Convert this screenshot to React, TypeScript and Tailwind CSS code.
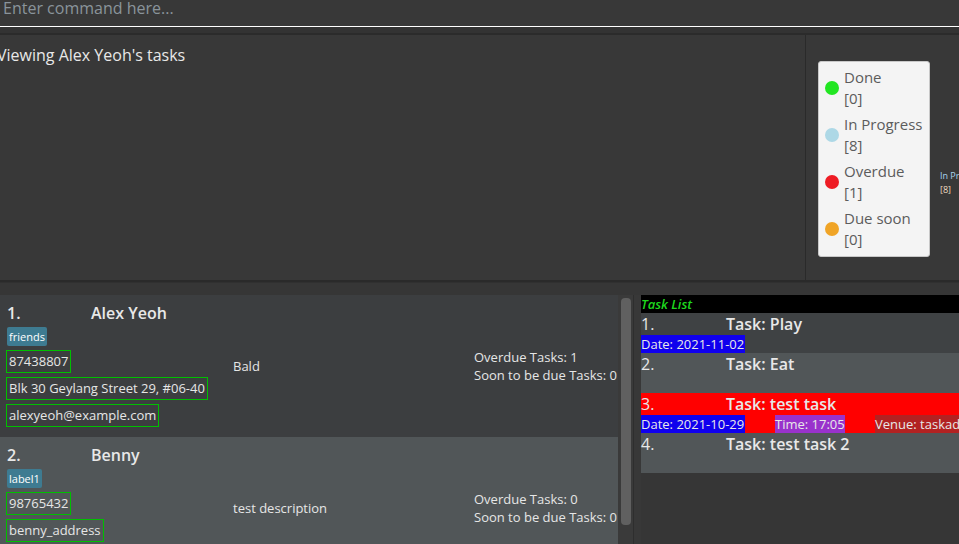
import React from "react";

const font = { fontFamily: '"Open Sans", "Noto Sans", sans-serif' };

type Person = {
  idx: number;
  name: string;
  tag: string;
  phone: string;
  address: string;
  email: string;
  desc: string;
  overdue: number;
  soon: number;
  bg: string;
};

const people: Person[] = [
  {
    idx: 1,
    name: "Alex Yeoh",
    tag: "friends",
    phone: "87438807",
    address: "Blk 30 Geylang Street 29, #06-40",
    email: "alexyeoh@example.com",
    desc: "Bald",
    overdue: 1,
    soon: 0,
    bg: "bg-[#3c3e40]",
  },
  {
    idx: 2,
    name: "Benny",
    tag: "label1",
    phone: "98765432",
    address: "benny_address",
    email: "benny@example.com",
    desc: "test description",
    overdue: 0,
    soon: 0,
    bg: "bg-[#515658]",
  },
];

const legend = [
  { label: "Done", count: 0, color: "bg-[#22e622]" },
  { label: "In Progress", count: 8, color: "bg-[#add8e6]" },
  { label: "Overdue", count: 1, color: "bg-[#ee1c24]" },
  { label: "Due soon", count: 0, color: "bg-[#f0a426]" },
];

function PersonCard({ p }: { p: Person }) {
  return (
    <div className={`flex h-[142px] shrink-0 items-center ${p.bg}`}>
      <div className="flex h-full w-[233px] shrink-0 flex-col pl-[6px] pt-[8px]">
        <div className="flex h-[20px] items-center text-[16px] font-semibold text-[#e8e8e8]">
          <span className="w-[85px] pl-px">{p.idx}.</span>
          <span>{p.name}</span>
        </div>
        <div className="mt-[4px] flex">
          <span className="ml-px rounded-[2px] bg-[#3e7b91] px-[2px] text-[11px] leading-[19px] text-white">
            {p.tag}
          </span>
        </div>
        {[p.phone, p.address, p.email].map((v) => (
          <div key={v} className="mt-[4px] flex">
            <span className="border border-[#00c000] px-[2px] text-[13px] leading-[21px] text-[#e6e6e6]">
              {v}
            </span>
          </div>
        ))}
      </div>
      <div className="w-[241px] shrink-0 pt-px text-[13px] text-[#e6e6e6]">{p.desc}</div>
      <div className="whitespace-nowrap text-[13px] leading-[18px] text-[#e6e6e6]">
        <div>Overdue Tasks: {p.overdue}</div>
        <div>Soon to be due Tasks: {p.soon}</div>
      </div>
    </div>
  );
}

function TaskRow({
  idx,
  title,
  bg,
  date,
  time,
  venue,
}: {
  idx: number;
  title: string;
  bg: string;
  date?: string;
  time?: string;
  venue?: string;
}) {
  return (
    <div className={`h-[40px] ${bg}`}>
      <div className="flex h-[22px] items-center text-[16px] text-[#e8e8e8]">
        <span className="w-[85px]">{idx}.</span>
        <span className="font-semibold">{title}</span>
      </div>
      <div className="flex h-[18px] gap-[30px] whitespace-nowrap text-[13px] leading-[18px] text-[#e8e8e8]">
        {date && <span className="w-[104px] bg-[#1000ee]">Date: {date}</span>}
        {time && <span className="w-[70px] bg-[#9932cc]">Time: {time}</span>}
        {venue && <span className="w-[100px] bg-[#b22222]">Venue: {venue}</span>}
      </div>
    </div>
  );
}

export default function App() {
  return (
    <div
      style={font}
      className="flex h-[544px] w-[959px] flex-col overflow-hidden bg-[#383838]"
    >
      {/* Command box */}
      <div className="h-[27px] shrink-0 border-b border-white pl-[3px] text-[16px] leading-[16px] text-[#8a949b]">
        Enter command here...
      </div>
      <div className="h-[8px] shrink-0 border-b-2 border-[#2b2b2b] bg-[#333333]" />

      {/* Result / stats panel */}
      <div className="flex h-[245px] shrink-0">
        <div className="w-[806px] shrink-0 border-r border-[#2a2a2a] pt-[8px] text-[16px] text-[#e8e8e8]">
          <div className="-ml-[3px]">Viewing Alex Yeoh's tasks</div>
        </div>
        <div className="flex flex-1">
          <div className="ml-[12px] mt-[26px] h-[196px] w-[112px] shrink-0 rounded-[3px] border border-[#c8c8c8] bg-[#f4f4f4] pt-[2px]">
            {legend.map((l) => (
              <div key={l.label} className="flex h-[47px] items-center">
                <span className={`ml-[6px] h-[14px] w-[14px] shrink-0 rounded-full ${l.color}`} />
                <div className="ml-[5px] text-[15px] leading-[21px] text-[#5c5c5c]">
                  <div>{l.label}</div>
                  <div>[{l.count}]</div>
                </div>
              </div>
            ))}
          </div>
          <div className="ml-[10px] mt-[134px] text-[9px] leading-[14px]">
            <div className="whitespace-nowrap text-[#a9d4ee]">In Progress</div>
            <div className="text-[#f0dcc0]">[8]</div>
          </div>
        </div>
      </div>

      <div className="h-[3px] shrink-0 border-t-2 border-[#2a2a2a] bg-[#303030]" />

      {/* Lists */}
      <div className="flex min-h-0 flex-1 bg-[#363636] pt-[12px]">
        <div className="flex w-[618px] shrink-0 flex-col">
          {people.map((p) => (
            <PersonCard key={p.idx} p={p} />
          ))}
        </div>
        <div className="w-[15px] shrink-0 bg-[#3a3a3a] pl-[3px] pt-[3px]">
          <div className="h-[227px] w-[10px] rounded-[4px] bg-[#606060]" />
        </div>
        <div className="w-[8px] shrink-0 border-l border-[#2e2e2e] bg-[#383838]" />
        <div className="flex flex-1 flex-col">
          <div className="h-[18px] bg-black text-[13px] font-semibold italic leading-[18px] text-[#1ed81e]">
            Task List
          </div>
          <TaskRow idx={1} title="Task: Play" bg="bg-[#3f4244]" date="2021-11-02" />
          <TaskRow idx={2} title="Task: Eat" bg="bg-[#515658]" />
          <TaskRow
            idx={3}
            title="Task: test task"
            bg="bg-[#ff0000]"
            date="2021-10-29"
            time="17:05"
            venue="taskaddress"
          />
          <TaskRow idx={4} title="Task: test task 2" bg="bg-[#515658]" />
        </div>
      </div>
    </div>
  );
}
